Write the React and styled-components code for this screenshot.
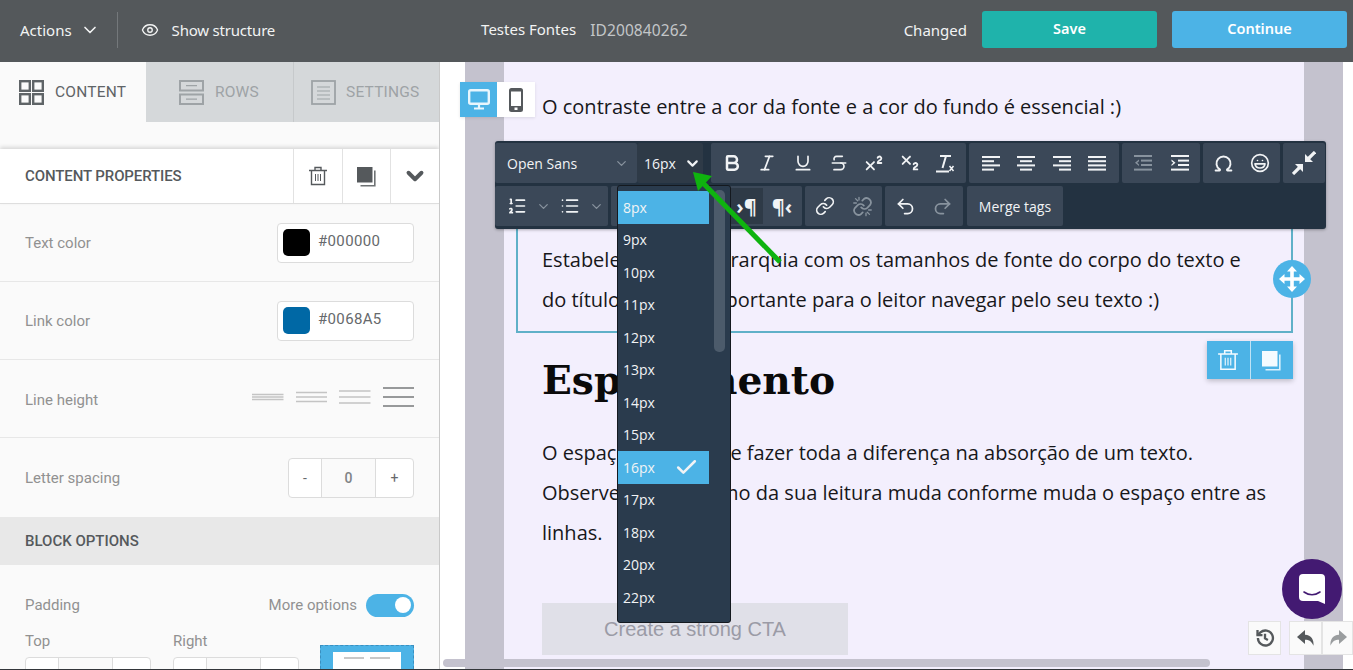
import React from "react";
import styled, { createGlobalStyle } from "styled-components";
import {
  Bold,
  ChevronDown,
  Check,
  Eye,
  Italic,
  Underline,
  Strikethrough,
  Superscript,
  Subscript,
  Omega,
  Laugh,
  ListOrdered,
  List,
  Link,
  Undo2,
  Redo2,
} from "lucide-react";

const GlobalStyle = createGlobalStyle`
  html, body { margin: 0; padding: 0; height: 100%; overflow: hidden; }
  body { font-family: "Roboto", "Liberation Sans", sans-serif; }
  * { box-sizing: border-box; }
`;

const Page = styled.div`
  height: 670px;
  display: flex;
  flex-direction: column;
  border-bottom: 1px solid #33363a;
  overflow: hidden;
`;

const TopBar = styled.header`
  height: 62px;
  flex: none;
  background: #54585b;
  color: #f2f3f3;
  display: flex;
  align-items: center;
  padding: 0 6px 3px 20px;
  font-family: "Noto Sans", "Open Sans", sans-serif;
  font-size: 15px;
`;

const BarItem = styled.div`
  display: flex;
  align-items: center;
  gap: ${(p) => p.$gap || 8}px;
  letter-spacing: ${(p) => p.$spacing || 0}px;
  white-space: nowrap;
`;

const BarDivider = styled.div`
  width: 1px;
  height: 36px;
  background: #74787b;
  margin: 0 23px 0 17px;
`;

const FileName = styled.div`
  margin-left: 206px;
  display: flex;
  gap: 14px;
  white-space: nowrap;
`;

const FileId = styled.span`
  color: #c3c6c8;
  font-size: 15.5px;
  letter-spacing: 0.1px;
`;

const BarActions = styled.div`
  margin-left: auto;
  display: flex;
  align-items: center;
`;

const ChangedLabel = styled.span`
  margin-right: 15px;
`;

const BarButton = styled.button`
  width: 175px;
  height: 37px;
  border: 0;
  border-radius: 3px;
  margin-left: ${(p) => p.$ml || 0}px;
  padding: 0 0 3px;
  color: #fff;
  font: 600 14.5px "Noto Sans", "Open Sans", sans-serif;
  background: ${(p) => p.$bg};
`;

const Body = styled.div`
  flex: 1;
  display: flex;
  min-height: 0;
`;

const Sidebar = styled.aside`
  width: 440px;
  flex: none;
  background: #fafafa;
  border-right: 1px solid #c9c9c9;
  overflow: hidden;
  color: #919191;
  font-size: 15px;
`;

const Tabs = styled.div`
  display: flex;
  height: 60px;
`;

const Tab = styled.div`
  width: ${(p) => p.$w}px;
  display: flex;
  align-items: center;
  gap: ${(p) => p.$gap}px;
  padding-left: ${(p) => p.$pl}px;
  font-size: 15.5px;
  letter-spacing: 0.2px;
  color: ${(p) => (p.$active ? "#5f6467" : "#9ea3a6")};
  background: ${(p) => (p.$active ? "#fafafa" : "#d5d8da")};
  border-left: ${(p) => (p.$divided ? "1px solid #c6c9cb" : "0")};
`;

const PanelHead = styled.div`
  margin-top: 27px;
  height: 55px;
  background: #fff;
  border-bottom: 1px solid #dedede;
  box-shadow: 0 -2px 4px rgba(0, 0, 0, 0.14);
  display: flex;
  align-items: center;
  padding-left: 25px;
`;

const PanelTitle = styled.div`
  flex: 1;
  font-size: 15px;
  font-weight: 500;
  color: #55595c;
  letter-spacing: -0.1px;
`;

const PanelButton = styled.div`
  width: ${(p) => p.$w}px;
  height: 100%;
  display: flex;
  align-items: center;
  justify-content: center;
  border-left: 1px solid #e2e2e2;
  color: #55595c;
`;

const PropRow = styled.div`
  height: ${(p) => p.$h || 78}px;
  display: flex;
  align-items: center;
  justify-content: space-between;
  padding: ${(p) => p.$pt || 0}px 25px 0;
  border-bottom: ${(p) => (p.$last ? "0" : "1px solid #e7e7e7")};
`;

const ColorField = styled.div`
  width: 137px;
  height: 40px;
  background: #fff;
  border: 1px solid #dcdcdc;
  border-radius: 4px;
  display: flex;
  align-items: center;
  gap: 8px;
  padding-left: 5px;
  color: #66696c;
  font-size: 15px;
  letter-spacing: 0.35px;
`;

const ColorValue = styled.span`
  margin-bottom: 3px;
`;

const Swatch = styled.span`
  width: 27px;
  height: 27px;
  border-radius: 5px;
  background: ${(p) => p.$color};
`;

const LineOptions = styled.div`
  display: flex;
  gap: 12px;
  margin-top: -6px;

  svg {
    width: 31.5px;
  }
`;

const Stepper = styled.div`
  width: 126px;
  height: 40px;
  background: #fff;
  border: 1px solid #dcdcdc;
  border-radius: 4px;
  display: grid;
  grid-template-columns: 32px 55px 1fr;
  color: #66696c;
  font-size: 14px;
`;

const StepCell = styled.div`
  display: flex;
  align-items: center;
  justify-content: center;
  ${(p) => p.$mid && "background: #fafafa; border: solid #dcdcdc; border-width: 0 1px; font-weight: 500; color: #808386;"}
`;

const SectionBand = styled.div`
  height: 48px;
  background: #e8e8e8;
  display: flex;
  align-items: center;
  padding-left: 25px;
  font-size: 15px;
  font-weight: 500;
  color: #55595c;
`;

const PaddingHead = styled.div`
  margin-top: 28px;
  padding: 0 25px;
  display: flex;
  justify-content: space-between;
  align-items: center;
  height: 24px;
`;

const ToggleWrap = styled.div`
  display: flex;
  align-items: center;
  gap: 9px;
`;

const Toggle = styled.div`
  width: 48px;
  height: 23px;
  border-radius: 12px;
  background: #4cb3e6;
  display: flex;
  align-items: center;
  justify-content: flex-end;
  padding-right: 3px;

  &::after {
    content: "";
    width: 16px;
    height: 16px;
    border-radius: 50%;
    background: #fff;
  }
`;

const PaddingGrid = styled.div`
  margin-top: 16px;
  padding: 0 25px;
  display: grid;
  grid-template-columns: 126px 126px 1fr;
  column-gap: 22px;
`;

const FieldLabel = styled.div`
  height: 16px;
  line-height: 16px;
  margin-bottom: 8px;
`;

const PaddingPreview = styled.div`
  width: 94px;
  height: 50px;
  margin-left: -1px;
  margin-top: 12px;
  background: #4cb3e6;
  border: 1px dashed #3a8fc0;
  padding: 6px 12px 0;
`;

const PreviewInner = styled.div`
  height: 100%;
  background: #fff;
  display: flex;
  justify-content: center;
  gap: 6px;
  padding-top: 5px;

  &::before,
  &::after {
    content: "";
    width: 20px;
    height: 2px;
    background: #c8c8c8;
  }
`;

const Main = styled.main`
  flex: 1;
  position: relative;
  background: #fff;
  overflow: hidden;
`;

const Stage = styled.div`
  width: 878px;
  margin-left: 25px;
  height: 100%;
  background: #c4c2ce;
  padding: 0 39px;
`;

const Sheet = styled.div`
  height: 100%;
  background: #f3effd;
  padding-top: 25px;
  font-family: "Open Sans", "Noto Sans", sans-serif;
  font-size: 20px;
  line-height: 40px;
  color: #17171a;
`;

const Para = styled.p`
  margin: ${(p) => p.$mt || 0}px 0 0;
  padding: 0 38px;
  white-space: nowrap;
`;

const SelectedBlock = styled.div`
  margin: 101px 0 0 12px;
  width: 777px;
  height: 105px;
  padding-top: 12px;
  border: 2px solid #5fb0c8;
  border-top: 0;

  p {
    padding: 0 24px;
    margin: 0;
    white-space: nowrap;
  }
`;

const Heading = styled.h1`
  margin: 21px 0 0;
  padding: 0 38px;
  font-family: "DejaVu Serif", "Liberation Serif", serif;
  font-size: 39.2px;
  line-height: 52px;
  font-weight: 700;
  color: #0a0a0a;
`;

const CtaButton = styled.div`
  margin: 50px 0 0 38px;
  width: 306px;
  height: 52px;
  background: #e0e0e8;
  color: #9b9ba6;
  font: 20px/52px "Liberation Sans", sans-serif;
  text-align: center;
`;

const DeviceSwitch = styled.div`
  position: absolute;
  left: 20px;
  top: 20px;
  display: flex;
  box-shadow: 0 1px 3px rgba(0, 0, 0, 0.1);
`;

const DeviceButton = styled.div`
  width: ${(p) => (p.$on ? 37 : 38)}px;
  height: 35px;
  display: flex;
  align-items: center;
  justify-content: center;
  background: ${(p) => (p.$on ? "#4cb3e6" : "#fff")};
  color: ${(p) => (p.$on ? "#e8f6fd" : "#55595c")};
`;

const Toolbar = styled.div`
  position: absolute;
  left: 55px;
  top: 79px;
  width: 831px;
  height: 88px;
  padding: 2px 0 3px;
  background: #233241;
  border-radius: 3px;
  display: flex;
  flex-direction: column;
  gap: 3px;
  box-shadow: 0 1px 3px rgba(0, 0, 0, 0.3);
  color: #f1f3f5;
  font-family: "Open Sans", "Noto Sans", sans-serif;
  font-size: 14px;
`;

const ToolRow = styled.div`
  height: 40px;
  display: flex;
`;

const ToolGroup = styled.div`
  width: ${(p) => p.$w}px;
  margin-left: ${(p) => p.$ml ?? 3}px;
  display: flex;
  align-items: center;
  justify-content: ${(p) => p.$justify || "center"};
  padding: ${(p) => p.$pad || "0"};
  background: ${(p) => (p.$dark ? "#2e3a47" : "#3b4858")};
  border-radius: 2px;
`;

const ToolButton = styled.div`
  width: ${(p) => p.$w || 35.6}px;
  height: ${(p) => (p.$on ? "36px" : "100%")};
  flex: none;
  display: flex;
  align-items: center;
  justify-content: center;
  font-size: 20px;
  font-weight: 700;
  color: ${(p) => (p.$dim ? "#88939e" : "#f1f3f5")};
  background: ${(p) => (p.$on ? "#2e3a47" : "transparent")};
`;

const SizeMenu = styled.ul`
  position: absolute;
  left: 177px;
  top: 123px;
  width: 114px;
  height: 438px;
  margin: 0;
  padding: 5px 0 0;
  list-style: none;
  background: #2a3b4d;
  border: 1px solid #14191f;
  border-radius: 3px;
  color: #f1f3f5;
  font-family: "Open Sans", "Noto Sans", sans-serif;
  font-size: 14px;
`;

const SizeItem = styled.li`
  width: 91px;
  height: 32.5px;
  display: flex;
  align-items: center;
  justify-content: space-between;
  padding: 0 10px 0 5px;
  background: ${(p) => (p.$on ? "#4cb3e6" : "transparent")};
`;

const MenuThumb = styled.div`
  position: absolute;
  right: 5px;
  top: 4px;
  width: 11px;
  height: 162px;
  border-radius: 5px;
  background: #4c5b6b;
`;

const Arrow = styled.svg`
  position: absolute;
  left: 240px;
  top: 100px;
  pointer-events: none;
`;

const MoveHandle = styled.div`
  position: absolute;
  left: 833px;
  top: 198px;
  width: 38px;
  height: 38px;
  border-radius: 50%;
  background: #4cb3e6;
  color: #fff;
  display: flex;
  align-items: center;
  justify-content: center;
`;

const BlockTools = styled.div`
  position: absolute;
  left: 767px;
  top: 279px;
  width: 86px;
  height: 38px;
  display: flex;
  background: #4cb3e6;
  color: #f4fbff;
  box-shadow: 0 2px 5px rgba(0, 0, 0, 0.22);
`;

const BlockTool = styled.div`
  flex: 1;
  display: flex;
  align-items: center;
  justify-content: center;
  border-left: ${(p) => (p.$divided ? "1px solid #bfe3f6" : "0")};
`;

const ChatBubble = styled.div`
  position: absolute;
  left: 842px;
  top: 497px;
  width: 60px;
  height: 60px;
  border-radius: 50%;
  background: #431a72;
  display: flex;
  align-items: center;
  justify-content: center;
`;

const HistoryButton = styled.div`
  position: absolute;
  left: ${(p) => p.$left}px;
  top: 559px;
  width: ${(p) => p.$w}px;
  height: 34px;
  background: #fafafa;
  border: 1px solid #e4e4e4;
  display: flex;
  align-items: center;
  justify-content: center;
  color: ${(p) => (p.$dim ? "#9a9d9f" : "#55595c")};
`;

const ScrollThumb = styled.div`
  position: absolute;
  left: 3px;
  bottom: 2px;
  width: 767px;
  height: 8px;
  border-radius: 4px;
  background: #c4c2ce;
`;

const Grid4 = () => (
  <svg width="25" height="25" viewBox="0 0 25 25" fill="none" stroke="currentColor" strokeWidth="2.4">
    <rect x="1.2" y="1.2" width="9.6" height="9.6" />
    <rect x="14.2" y="1.2" width="9.6" height="9.6" />
    <rect x="1.2" y="14.2" width="9.6" height="9.6" />
    <rect x="14.2" y="14.2" width="9.6" height="9.6" />
  </svg>
);

const RowsIcon = () => (
  <svg width="25" height="25" viewBox="0 0 25 25" fill="none" stroke="currentColor" strokeWidth="2">
    <rect x="1" y="1" width="23" height="9.5" />
    <rect x="1" y="14.5" width="23" height="9.5" />
    <path d="M7 5.7h11M7 19.2h11" strokeWidth="1.2" />
  </svg>
);

const SettingsIcon = () => (
  <svg width="25" height="25" viewBox="0 0 25 25" fill="none" stroke="currentColor" strokeWidth="1.8">
    <rect x="1" y="1" width="23" height="23" />
    <path d="M6 7h13M6 11h13M6 15h13M6 19h13" strokeWidth="1.2" />
  </svg>
);

const TrashIcon = ({ size = 20 }) => (
  <svg width={size} height={size} viewBox="0 0 20 20" fill="none" stroke="currentColor" strokeWidth="1.4">
    <path d="M1 4.5h18M7 4.5V1.5h6v3M3.5 4.5v14h13v-14" />
    <path d="M7.5 8v7M10 8v7M12.5 8v7" strokeWidth="1" />
  </svg>
);

const CopyIcon = ({ size = 21 }) => (
  <svg width={size} height={size} viewBox="0 0 21 21">
    <path d="M18.8 4.5v15.3H4.5" fill="none" stroke="currentColor" strokeWidth="1.6" opacity="0.85" />
    <path d="M1 1h15.5v15.5H1z" fill="currentColor" />
  </svg>
);

const MonitorIcon = () => (
  <svg width="22" height="21" viewBox="0 0 22 21" fill="none" stroke="currentColor">
    <rect x="1.2" y="1.2" width="19.6" height="13.6" rx="1.5" strokeWidth="2.4" />
    <path d="M11 15v4M6 19.5h10" strokeWidth="2.2" />
  </svg>
);

const PhoneIcon = () => (
  <svg width="14" height="24" viewBox="0 0 14 24" fill="currentColor">
    <path
      fillRule="evenodd"
      d="M2.5 0h9A2.5 2.5 0 0 1 14 2.5v19a2.5 2.5 0 0 1-2.5 2.5h-9A2.5 2.5 0 0 1 0 21.5v-19A2.5 2.5 0 0 1 2.5 0zM2 3.5V18h10V3.5zM5.5 19.5v2.5h3v-2.5z"
    />
  </svg>
);

const MoveIcon = () => (
  <svg width="26" height="26" viewBox="0 0 26 26" fill="currentColor">
    <path d="M13 0l5 5.5h-3.2v5.7h5.7V8l5.5 5-5.500 5v-3.200h-5.700v5.700H18L13 26l-5-5.500h3.200v-5.700H5.500V18L0 13l5.500-5v3.200h5.700V5.500H8z" />
  </svg>
);

const UnlinkIcon = () => (
  <svg width="21" height="21" viewBox="0 0 24 24" fill="none" stroke="currentColor" strokeWidth="2" strokeLinecap="round">
    <path d="M10.5 13a5 5 0 0 0 7 .5l3-3a5 5 0 0 0-7-7l-1.700 1.700" />
    <path d="M13.5 11a5 5 0 0 0-7-.5l-3 3a5 5 0 0 0 7 7l1.700-1.700" />
    <path d="M4 3l2.500 2.500M2 8h3M8 1.500v3M20 21l-2.500-2.500M22 16h-3M16 22.500v-3" strokeWidth="1.5" />
  </svg>
);

const LineSet = ({ gap, color }) => (
  <svg width="32" height="20" viewBox="0 0 32 20" preserveAspectRatio="none" stroke={color} strokeWidth="1.6">
    <path d={`M0 ${10 - gap}h32M0 10h32M0 ${10 + gap}h32`} />
  </svg>
);

const AlignIcon = ({ lines }) => (
  <svg width="18" height="15" viewBox="0 0 18 15" fill="currentColor">
    {lines.map(([x, w], i) => (
      <rect key={i} x={x} y={i * 4.2} width={w} height="2" />
    ))}
  </svg>
);

const IndentIcon = ({ flip }) => (
  <svg width="18" height="16" viewBox="0 0 18 16" fill="currentColor">
    <rect x="0" y="0" width="18" height="2" />
    <rect x="7" y="4.6" width="11" height="2" />
    <rect x="7" y="9" width="11" height="2" />
    <rect x="0" y="13.6" width="18" height="2" />
    <path d={flip ? "M5 4.5L1 7.8l4 3.3V9.4L3.2 7.800 5 6.200z" : "M0.5 4.5l4 3.3-4 3.3V9.4l1.8-1.600L0.500 6.200z"} />
  </svg>
);

const ClearFormat = () => (
  <svg width="20" height="20" viewBox="0 0 20 20" fill="none" stroke="currentColor" strokeWidth="2">
    <path d="M5 3h11M11 3L7.5 15M1 18.5h13" />
    <path d="M14.5 13l4 5M18.5 13l-4 5" strokeWidth="1.5" />
  </svg>
);

const CollapseIcon = () => (
  <svg width="24" height="24" viewBox="0 0 24 24" fill="#f1f3f5" stroke="#f1f3f5">
    <path d="M13 11V3l8 8z" strokeWidth="0" />
    <path d="M16 8l7-7" strokeWidth="3.2" />
    <path d="M11 13v8l-8-8z" strokeWidth="0" />
    <path d="M8 16l-7 7" strokeWidth="3.2" />
  </svg>
);

const ChatGlyph = () => (
  <svg width="26" height="30" viewBox="0 0 26 30">
    <path d="M4 0h18a4 4 0 0 1 4 4v26l-7-3H4a4 4 0 0 1-4-4V4a4 4 0 0 1 4-4z" fill="#fff" />
    <path d="M5 18c5 3.5 11 3.5 16 0" fill="none" stroke="#431a72" strokeWidth="1.6" strokeLinecap="round" />
  </svg>
);

const HistoryGlyph = () => (
  <svg width="20" height="20" viewBox="0 0 24 24" fill="none" stroke="currentColor" strokeWidth="2.8">
    <path d="M3.5 12a9 9 0 1 0 3-6.7L3 8.500" />
    <path d="M3 2.5v6h6" />
    <path d="M12 7v5.500l3.500 2" />
  </svg>
);

const ReplyGlyph = styled(({ className }) => (
  <svg className={className} width="20" height="18" viewBox="0 0 20 18" fill="currentColor">
    <path d="M9 1L1 8l8 7v-4.200c4.200 0 6.600 1.600 8.500 6 .5-6.300-2.200-10.500-8.500-11z" />
  </svg>
))`
  transform: ${(p) => (p.$flip ? "scaleX(-1)" : "none")};
`;

const sizes = ["8px", "9px", "10px", "11px", "12px", "13px", "14px", "15px", "16px", "17px", "18px", "20px", "22px"];

const formatIcons = [Bold, Italic, Underline, Strikethrough, Superscript, Subscript];

const alignments = [
  [[0, 18], [0, 12], [0, 18], [0, 12]],
  [[0, 18], [3, 12], [0, 18], [3, 12]],
  [[0, 18], [6, 12], [0, 18], [6, 12]],
  [[0, 18], [0, 18], [0, 18], [0, 18]],
];

const App = () => {
  return (
    <Page>
      <GlobalStyle />
      <TopBar>
        <BarItem>
          Actions <ChevronDown size={20} strokeWidth={2} />
        </BarItem>
        <BarDivider />
        <BarItem $gap={13} $spacing={-0.2}>
          <Eye size={18} strokeWidth={1.8} /> Show structure
        </BarItem>
        <FileName>
          <span>Testes Fontes</span>
          <FileId>ID200840262</FileId>
        </FileName>
        <BarActions>
          <ChangedLabel>Changed</ChangedLabel>
          <BarButton $bg="#1fb3ab">Save</BarButton>
          <BarButton $bg="#4cb3e6" $ml={15}>Continue</BarButton>
        </BarActions>
      </TopBar>
      <Body>
        <Sidebar>
          <Tabs>
            <Tab $active $w={146} $pl={19} $gap={11}>
              <Grid4 /> CONTENT
            </Tab>
            <Tab $w={147} $pl={33} $gap={11}>
              <RowsIcon /> ROWS
            </Tab>
            <Tab $divided $w={146} $pl={17} $gap={10}>
              <SettingsIcon /> SETTINGS
            </Tab>
          </Tabs>
          <PanelHead>
            <PanelTitle>CONTENT PROPERTIES</PanelTitle>
            <PanelButton $w={49}><TrashIcon /></PanelButton>
            <PanelButton $w={48}><CopyIcon /></PanelButton>
            <PanelButton $w={49}><ChevronDown size={26} strokeWidth={3.6} /></PanelButton>
          </PanelHead>
          <PropRow>
            Text color
            <ColorField><Swatch $color="#000" /><ColorValue>#000000</ColorValue></ColorField>
          </PropRow>
          <PropRow>
            Link color
            <ColorField><Swatch $color="#0068a5" /><ColorValue>#0068A5</ColorValue></ColorField>
          </PropRow>
          <PropRow $pt={2}>
            Line height
            <LineOptions>
              <LineSet gap={2.5} color="#c4c4c4" />
              <LineSet gap={4.5} color="#c4c4c4" />
              <LineSet gap={6} color="#c4c4c4" />
              <LineSet gap={9} color="#77797b" />
            </LineOptions>
          </PropRow>
          <PropRow $h={79} $last>
            Letter spacing
            <Stepper>
              <StepCell>-</StepCell>
              <StepCell $mid>0</StepCell>
              <StepCell>+</StepCell>
            </Stepper>
          </PropRow>
          <SectionBand>BLOCK OPTIONS</SectionBand>
          <PaddingHead>
            Padding
            <ToggleWrap>
              More options <Toggle />
            </ToggleWrap>
          </PaddingHead>
          <PaddingGrid>
            <div>
              <FieldLabel>Top</FieldLabel>
              <Stepper><StepCell /><StepCell $mid /><StepCell /></Stepper>
            </div>
            <div>
              <FieldLabel>Right</FieldLabel>
              <Stepper><StepCell /><StepCell $mid /><StepCell /></Stepper>
            </div>
            <PaddingPreview><PreviewInner /></PaddingPreview>
          </PaddingGrid>
        </Sidebar>
        <Main>
          <Stage>
            <Sheet>
              <Para>O contraste entre a cor da fonte e a cor do fundo é essencial :)</Para>
              <SelectedBlock>
                <p>Estabelecer uma hierarquia com os tamanhos de fonte do corpo do texto e</p>
                <p>do título é muito importante para o leitor navegar pelo seu texto :)</p>
              </SelectedBlock>
              <Heading>Espaçamento</Heading>
              <Para $mt={27}>O espaçamento pode fazer toda a diferença na absorção de um texto.</Para>
              <Para>Observe como o ritmo da sua leitura muda conforme muda o espaço entre as</Para>
              <Para>linhas.</Para>
              <CtaButton>Create a strong CTA</CtaButton>
            </Sheet>
          </Stage>

          <DeviceSwitch>
            <DeviceButton $on><MonitorIcon /></DeviceButton>
            <DeviceButton><PhoneIcon /></DeviceButton>
          </DeviceSwitch>

          <Toolbar>
            <ToolRow>
              <ToolGroup $ml={0} $w={142} $justify="space-between" $pad="0 8px 0 12px">
                Open Sans <ChevronDown size={15} color="#88939e" />
              </ToolGroup>
              <ToolGroup $ml={0} $w={66} $dark $justify="space-between" $pad="0 2px 0 7px">
                16px <ChevronDown size={17} strokeWidth={3} />
              </ToolGroup>
              <ToolGroup $ml={8} $w={255}>
                {formatIcons.map((Icon, i) => (
                  <ToolButton key={i}><Icon size={i > 3 ? 22 : 20} strokeWidth={i === 0 ? 3 : 2} /></ToolButton>
                ))}
                <ToolButton><ClearFormat /></ToolButton>
              </ToolGroup>
              <ToolGroup $w={150}>
                {alignments.map((lines, i) => (
                  <ToolButton key={i}><AlignIcon lines={lines} /></ToolButton>
                ))}
              </ToolGroup>
              <ToolGroup $w={78}>
                <ToolButton $w={37} $dim><IndentIcon flip /></ToolButton>
                <ToolButton $w={37}><IndentIcon /></ToolButton>
              </ToolGroup>
              <ToolGroup $w={77}>
                <ToolButton $w={36}><Omega size={21} strokeWidth={2.2} /></ToolButton>
                <ToolButton $w={36}><Laugh size={20} /></ToolButton>
              </ToolGroup>
              <ToolGroup $w={42}><CollapseIcon /></ToolGroup>
            </ToolRow>
            <ToolRow>
              <ToolGroup $ml={0} $w={113} $justify="flex-start" $pad="0 0 0 9px">
                <ToolButton $w={26}><ListOrdered size={20} /></ToolButton>
                <ToolButton $w={26} $dim><ChevronDown size={15} /></ToolButton>
                <ToolButton $w={28}><List size={20} /></ToolButton>
                <ToolButton $w={24} $dim><ChevronDown size={15} /></ToolButton>
              </ToolGroup>
              <ToolGroup $w={191} $justify="flex-end" $pad="0 1px 0 0">
                <ToolButton $on $w={33}>›¶</ToolButton>
                <ToolButton $w={38}>¶‹</ToolButton>
              </ToolGroup>
              <ToolGroup $w={77}>
                <ToolButton $w={37}><Link size={20} /></ToolButton>
                <ToolButton $w={37} $dim><UnlinkIcon /></ToolButton>
              </ToolGroup>
              <ToolGroup $w={78}>
                <ToolButton $w={37}><Undo2 size={21} /></ToolButton>
                <ToolButton $w={37} $dim><Redo2 size={21} /></ToolButton>
              </ToolGroup>
              <ToolGroup $ml={4} $w={96}>Merge tags</ToolGroup>
            </ToolRow>
          </Toolbar>

          <SizeMenu>
            {sizes.map((size) => (
              <SizeItem key={size} $on={size === "8px" || size === "16px"}>
                {size}
                {size === "16px" && <Check size={25} strokeWidth={2.4} />}
              </SizeItem>
            ))}
            <MenuThumb />
          </SizeMenu>

          <Arrow width="110" height="110" viewBox="0 0 110 110">
            <path d="M100 100L22 20" stroke="#0fb30f" strokeWidth="5" fill="none" />
            <path d="M13 10L32 14L18 29z" fill="#0fb30f" />
          </Arrow>

          <MoveHandle><MoveIcon /></MoveHandle>
          <BlockTools>
            <BlockTool><TrashIcon size={22} /></BlockTool>
            <BlockTool $divided><CopyIcon /></BlockTool>
          </BlockTools>

          <ChatBubble><ChatGlyph /></ChatBubble>
          <HistoryButton $left={808} $w={33}><HistoryGlyph /></HistoryButton>
          <HistoryButton $left={849} $w={33}><ReplyGlyph /></HistoryButton>
          <HistoryButton $left={882} $w={31} $dim><ReplyGlyph $flip /></HistoryButton>

          <ScrollThumb />
        </Main>
      </Body>
    </Page>
  );
};

export default App;
